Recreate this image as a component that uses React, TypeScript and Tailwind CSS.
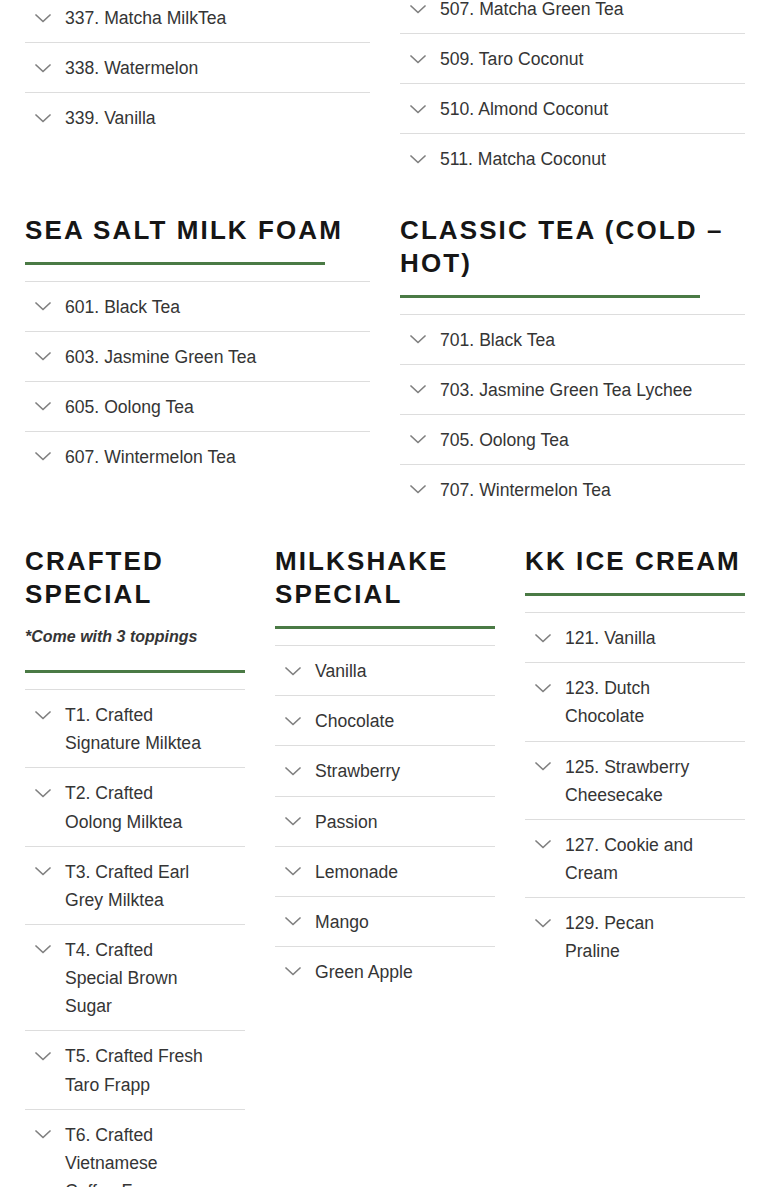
import React from 'react';

type Group = {
    title: string;
    note?: string;
    items: string[];
};

const Chevron: React.FC = () => (
    <span className="flex h-[28px] w-[16px] shrink-0 items-center justify-center">
        <svg width="16" height="9" viewBox="0 0 16 9" fill="none">
            <polyline points="1,1 8,7.5 15,1" stroke="#808080" strokeWidth="1.7" strokeLinecap="round" strokeLinejoin="round" />
        </svg>
    </span>
);

const Item: React.FC<{ label: string }> = ({ label }) => (
    <div className="flex items-start gap-[14px] border-t border-[#dddddd] pt-[11px] pb-[10px] pl-[10px] pr-[40px] cursor-pointer">
        <Chevron />
        <span className="text-[17.6px] leading-[1.6] text-[#353535]">{label}</span>
    </div>
);

const ItemList: React.FC<{ items: string[] }> = ({ items }) => (
    <div className="flex flex-col">
        {items.map((label) => (
            <Item key={label} label={label} />
        ))}
    </div>
);

const Section: React.FC<{ group: Group }> = ({ group }) => (
    <div className="flex flex-col">
        <h3 className="text-[26px] font-bold uppercase leading-[33px] tracking-[2.1px] text-[#161616]">{group.title}</h3>
        {group.note && (
            <p className="mt-[12px] text-[16px] font-bold italic leading-[28px] text-[#353535]">{group.note}</p>
        )}
        <div className={`h-[3px] w-full max-w-[300px] bg-[#4a7a45] ${group.note ? 'mt-[19px]' : 'mt-[15px]'}`}></div>
        <div className="mt-[16px]">
            <ItemList items={group.items} />
        </div>
    </div>
);

const seaSalt: Group = {
    title: 'Sea Salt Milk Foam',
    items: ['601. Black Tea', '603. Jasmine Green Tea', '605. Oolong Tea', '607. Wintermelon Tea']
};

const classic: Group = {
    title: 'Classic Tea (Cold – Hot)',
    items: ['701. Black Tea', '703. Jasmine Green Tea Lychee', '705. Oolong Tea', '707. Wintermelon Tea']
};

const crafted: Group = {
    title: 'Crafted Special',
    note: '*Come with 3 toppings',
    items: [
        'T1. Crafted Signature Milktea',
        'T2. Crafted Oolong Milktea',
        'T3. Crafted Earl Grey Milktea',
        'T4. Crafted Special Brown Sugar',
        'T5. Crafted Fresh Taro Frapp',
        'T6. Crafted Vietnamese Coffee Frapp'
    ]
};

const milkshake: Group = {
    title: 'Milkshake Special',
    items: ['Vanilla', 'Chocolate', 'Strawberry', 'Passion', 'Lemonade', 'Mango', 'Green Apple']
};

const iceCream: Group = {
    title: 'KK Ice Cream',
    items: ['121. Vanilla', '123. Dutch Chocolate', '125. Strawberry Cheesecake', '127. Cookie and Cream', '129. Pecan Praline']
};

export default function App() {
    return (
        <div className="min-h-[1187px] bg-white px-[25px] pb-10 font-['Liberation_Sans',Arial,sans-serif]">
            {/* tail of the previous menu groups */}
            <div className="grid grid-cols-2 items-start gap-x-[30px]">
                <div className="mt-[-8px]">
                    <ItemList items={['337. Matcha MilkTea', '338. Watermelon', '339. Vanilla']} />
                </div>
                <div className="mt-[-17px]">
                    <ItemList items={['507. Matcha Green Tea', '509. Taro Coconut', '510. Almond Coconut', '511. Matcha Coconut']} />
                </div>
            </div>

            <div className="mt-[30px] grid grid-cols-2 items-start gap-x-[30px]">
                <Section group={seaSalt} />
                <Section group={classic} />
            </div>

            <div className="mt-[31px] grid grid-cols-3 items-start gap-x-[30px]">
                <Section group={crafted} />
                <Section group={milkshake} />
                <Section group={iceCream} />
            </div>
        </div>
    );
}
